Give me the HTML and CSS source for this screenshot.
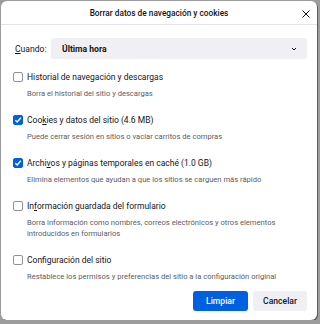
FILE: index.html
```html
<!DOCTYPE html>
<html lang="es">
<head>
<meta charset="UTF-8">
<meta name="viewport" content="width=device-width, initial-scale=1.0">
<title>Borrar datos de navegación y cookies</title>
<link rel="stylesheet" href="styles.css">
</head>
<body>
<div class="dialog">
  <div class="header">
    <span class="title">Borrar datos de navegación y cookies</span>
    <button class="close" aria-label="Cerrar">
      <svg width="8" height="8" viewBox="0 0 8 8"><path d="M0.5 0.5 L7.5 7.5 M7.5 0.5 L0.5 7.5" stroke="#15141a" stroke-width="1" fill="none"/></svg>
    </button>
  </div>
  <div class="content">
    <div class="when">
      <span class="when-label"><u>C</u>uando:</span>
      <div class="select">
        <span>Última hora</span>
        <svg width="8" height="6" viewBox="0 0 8 6"><path d="M2 2 L4 4 L6 2" stroke="#15141a" stroke-width="1" fill="none"/></svg>
      </div>
    </div>
    <div class="options">
      <div class="option">
        <div class="row"><span class="box"></span><span class="label">Historial de navegación y descargas</span></div>
        <div class="desc">Borra el historial del sitio y descargas</div>
      </div>
      <div class="option">
        <div class="row"><span class="box checked"><svg width="8" height="8" viewBox="0 0 8 8"><path d="M1.3 4.2 L3.2 6 L6.8 1.8" stroke="#fff" stroke-width="1.4" fill="none"/></svg></span><span class="label">Coo<u>k</u>ies y datos del sitio (4.6 MB)</span></div>
        <div class="desc">Puede cerrar sesión en sitios o vaciar carritos de compras</div>
      </div>
      <div class="option">
        <div class="row"><span class="box checked"><svg width="8" height="8" viewBox="0 0 8 8"><path d="M1.3 4.2 L3.2 6 L6.8 1.8" stroke="#fff" stroke-width="1.4" fill="none"/></svg></span><span class="label">Archi<u>v</u>os y páginas temporales en caché (1.0 GB)</span></div>
        <div class="desc">Elimina elementos que ayudan a que los sitios se carguen más rápido</div>
      </div>
      <div class="option">
        <div class="row"><span class="box"></span><span class="label">In<u>f</u>ormación guardada del formulario</span></div>
        <div class="desc">Borra información como nombres, correos electrónicos y otros elementos introducidos en formularios</div>
      </div>
      <div class="option">
        <div class="row"><span class="box"></span><span class="label">Conf<u>i</u>guración del sitio</span></div>
        <div class="desc">Restablece los permisos y preferencias del sitio a la configuración original</div>
      </div>
    </div>
    <div class="actions">
      <button class="btn primary">Limpiar</button>
      <button class="btn">Cancelar</button>
    </div>
  </div>
</div>
</body>
</html>
```

FILE: styles.css
```css
body {
  margin: 0;
  padding: 0;
  background-color: #9c9c9c;
  font-family: Roboto, "Noto Sans", sans-serif;
  color: #15141a;
}
.dialog {
  width: 316px;
  height: 319px;
  margin: 1px 0 0 1px;
  background-color: #fff;
  border-radius: 6px;
  box-shadow: 1px 1px 0 #5c5c5c;
  display: flex;
  flex-direction: column;
  overflow: hidden;
}
.header {
  height: 23px;
  border-bottom: 1px solid #e4e4e8;
  display: flex;
  align-items: center;
  justify-content: center;
  position: relative;
}
.title {
  font-size: 8.3px;
  line-height: 12px;
  font-weight: 500;
}
.close {
  position: absolute;
  right: 7px;
  top: 9px;
  width: 8px;
  height: 8px;
  padding: 0;
  border: none;
  background: none;
  display: flex;
  align-items: center;
  justify-content: center;
}
.content {
  padding: 13px 10px 0 12px;
  display: flex;
  flex-direction: column;
}
.when {
  display: flex;
  align-items: center;
  font-size: 8.6px;
  line-height: 12px;
}
.when-label {
  margin-left: 2px;
  width: 36px;
  white-space: nowrap;
}
.select {
  flex: 1;
  height: 21px;
  background-color: #f0f0f4;
  border-radius: 3px;
  display: flex;
  align-items: center;
  justify-content: space-between;
  padding: 0 9px 0 11px;
  font-weight: 700;
}
.options {
  margin-top: 11px;
  display: flex;
  flex-direction: column;
  gap: 13.5px;
}
.row {
  display: flex;
  align-items: center;
  height: 14px;
}
.box {
  width: 8px;
  height: 8px;
  border: 1px solid #8f8f9d;
  border-radius: 2px;
  margin-right: 4px;
  display: flex;
  align-items: center;
  justify-content: center;
  flex-shrink: 0;
}
.box.checked {
  background-color: #0061e0;
  border-color: #0061e0;
}
.label {
  font-size: 8.5px;
  line-height: 14px;
}
.desc {
  margin-top: 5px;
  margin-left: 14px;
  font-size: 7.6px;
  line-height: 10.5px;
  color: #5b5b66;
}
.actions {
  margin-top: 9px;
  display: flex;
  justify-content: flex-end;
  gap: 5px;
}
.btn {
  height: 20px;
  padding: 0 10px;
  border: none;
  border-radius: 3px;
  background-color: #f0f0f4;
  color: #15141a;
  font-family: inherit;
  font-size: 8.6px;
  font-weight: 500;
}
.btn.primary {
  background-color: #0061e0;
  color: #fff;
  padding: 0 13px;
}
```
